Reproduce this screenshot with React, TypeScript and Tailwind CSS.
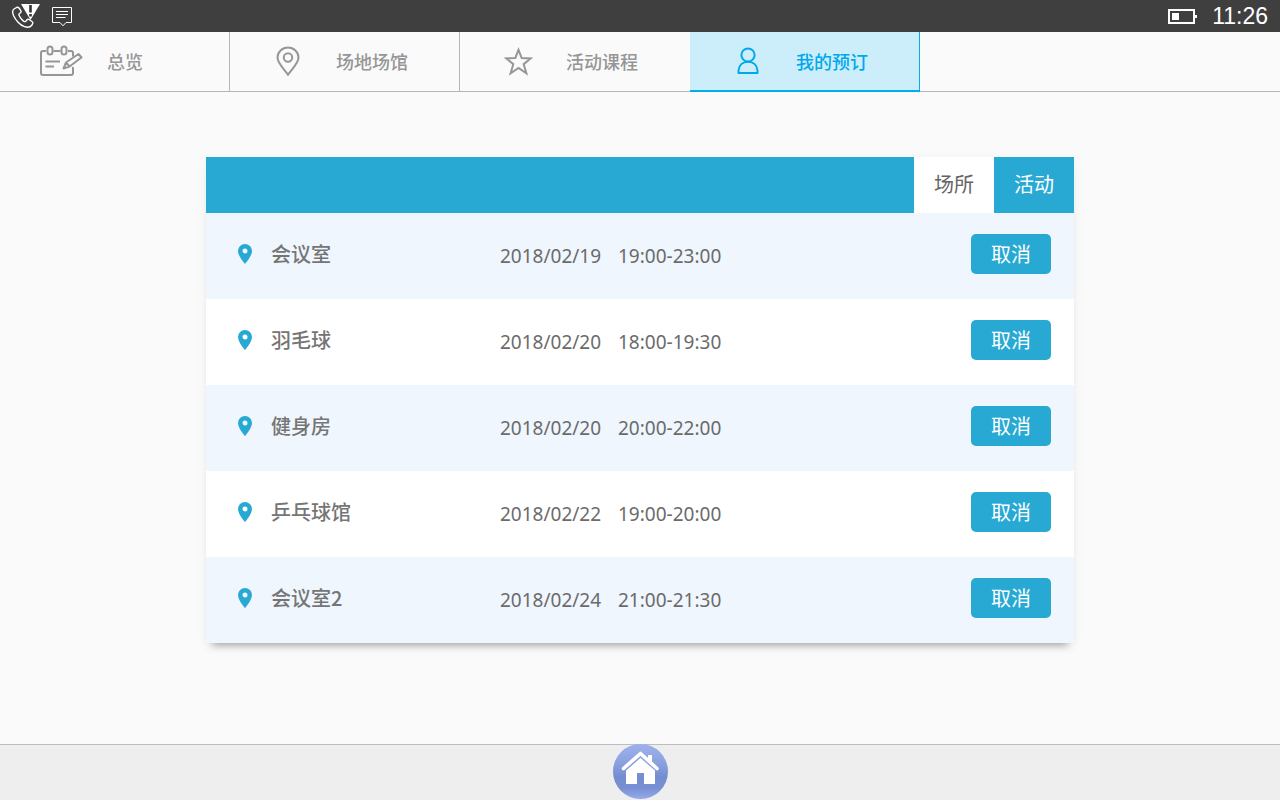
import { useState, type ReactNode } from "react";

function MissedCallIcon() {
  return (
    <svg width="30" height="26" viewBox="0 0 30 26" fill="none" aria-hidden="true">
      <path
        d="M6.500 4.500L4 6C2.500 7 2.300 9.500 3.500 12.500C5.500 17 10 22.300 14.500 23.700C18 24.800 20.500 24 22 22L22.800 20.300C23 19.500 22.700 19 22 18.500L19 16.500C18.200 16 17.500 16.200 17 16.800L15.800 18.200C15 19 14.300 18.700 13.500 18.100C11.800 16.700 10 14.500 9.100 12.500C8.700 11.600 8.800 11 9.500 10.500L10.500 9.700C11.100 9.200 11.200 8.500 10.800 7.700L9 5C8.400 4.200 7.500 4 6.500 4.500Z"
        stroke="#fff"
        strokeWidth="1.400"
      />
      <path d="M11 1H30L20.500 17Z" fill="#fff" />
      <path d="M19.200 2H21.800V9.500H19.200ZM19.200 11H21.800V13.500H19.200Z" fill="#333" />
    </svg>
  );
}

function MessageIcon() {
  return (
    <svg width="20" height="22" viewBox="0 0 20 22" fill="none" stroke="#fff" aria-hidden="true">
      <path d="M0.500 2.500H19.500V17.500H14L11 20.800L8 17.500H0.500Z" />
      <path d="M4 6.500H16M4 9.500H16M4 12.500H13.500" />
    </svg>
  );
}

function BatteryIcon() {
  return (
    <svg width="29" height="15" viewBox="0 0 29 15" aria-hidden="true">
      <rect x="1" y="1" width="25" height="13" fill="none" stroke="#fff" strokeWidth="2" />
      <rect x="27" y="6" width="2" height="3" fill="#fff" />
      <rect x="4" y="4" width="7" height="7" fill="#fff" />
    </svg>
  );
}

function OverviewIcon() {
  return (
    <svg width="43" height="32" viewBox="0 0 43 32" fill="none" stroke="currentColor" strokeWidth="2" aria-hidden="true">
      <path d="M6 6H3C1.800 6 1 6.800 1 8V28C1 29.300 1.800 30 3 30H31C32.300 30 33 29.300 33 28V22M13.500 6H20.500M28 6H31C32.300 6 33 6.800 33 8V11.500" />
      <rect x="7.500" y="1.500" width="5" height="8" rx="2.500" />
      <rect x="21.500" y="1.500" width="5" height="8" rx="2.500" />
      <path d="M5.500 16.500H20M5.500 21.500H14" />
      <path d="M23.500 23.500L26 17.500L38.500 9L41.500 12.500L29.500 21.500ZM26 17.500L29.500 21.500" strokeLinejoin="round" />
    </svg>
  );
}

function PlaceIcon() {
  return (
    <svg width="24" height="30" viewBox="0 0 24 30" fill="none" stroke="currentColor" strokeWidth="2" aria-hidden="true">
      <path d="M12 28.800C9.500 24.500 1.500 17.500 1.500 11.500A10.500 10 0 0 1 22.500 11.500C22.500 17.500 14.500 24.500 12 28.800Z" />
      <circle cx="12" cy="11.500" r="4.200" />
    </svg>
  );
}

function StarIcon() {
  return (
    <svg width="30" height="29" viewBox="0 0 30 29" fill="none" stroke="currentColor" strokeWidth="2" aria-hidden="true">
      <path d="M15.500 2.800L18.700 11.100L27.700 11.400L20.700 17.200L23.400 26.300L15.500 21L7.600 26.300L10.300 17.200L3.300 11.400L12.300 11.100Z" />
    </svg>
  );
}

function PersonIcon() {
  return (
    <svg width="22" height="28" viewBox="0 0 22 28" fill="none" stroke="currentColor" strokeWidth="2" aria-hidden="true">
      <circle cx="11" cy="8" r="6.600" />
      <path d="M1.500 26V23.500C2 18 6 14.800 11 14.800S20 18 20.500 23.500V26Z" strokeLinejoin="round" />
    </svg>
  );
}

function PinIcon() {
  return (
    <svg width="14" height="20" viewBox="0 0 14 20" aria-hidden="true">
      <path
        fill="#27a9d3"
        fillRule="evenodd"
        d="M7 0A7 7 0 0 0 0 7C0 12.200 7 20 7 20S14 12.200 14 7A7 7 0 0 0 7 0ZM7 4.500A2.500 2.500 0 1 1 7 9.500A2.500 2.500 0 0 1 7 4.500Z"
      />
    </svg>
  );
}

function HomeIcon() {
  return (
    <svg width="55" height="55" viewBox="0 0 55 55" aria-hidden="true">
      <defs>
        <linearGradient id="home-disc" x1="0" y1="0" x2="0" y2="1">
          <stop offset="0" stopColor="#9db2ec" />
          <stop offset="0.350" stopColor="#8ba1df" />
          <stop offset="0.600" stopColor="#748dcf" />
          <stop offset="0.800" stopColor="#7890d3" />
          <stop offset="1" stopColor="#94abec" />
        </linearGradient>
      </defs>
      <circle cx="27.500" cy="27.500" r="27.500" fill="url(#home-disc)" />
      <path d="M35 11H39V19L35 15.500Z" fill="#fff" />
      <path d="M10.500 24.500L27.500 9.500L44 24.500" fill="none" stroke="#fff" strokeWidth="3.600" strokeLinecap="round" strokeLinejoin="round" />
      <path d="M13 26.500L27.500 14L42 26.500V40H31V29H24V40H13Z" fill="#fff" />
    </svg>
  );
}

const tabs: { label: string; icon: ReactNode; spacing: string }[] = [
  { label: "总览", icon: <OverviewIcon />, spacing: "gap-6 pl-10" },
  { label: "场地场馆", icon: <PlaceIcon />, spacing: "gap-[27px] pl-9" },
  { label: "活动课程", icon: <StarIcon />, spacing: "gap-[27px] pl-9" },
  { label: "我的预订", icon: <PersonIcon />, spacing: "gap-[27px] pl-9" },
];

const bookings = [
  { name: "会议室", date: "2018/02/19", time: "19:00-23:00" },
  { name: "羽毛球", date: "2018/02/20", time: "18:00-19:30" },
  { name: "健身房", date: "2018/02/20", time: "20:00-22:00" },
  { name: "乒乓球馆", date: "2018/02/22", time: "19:00-20:00" },
  { name: "会议室2", date: "2018/02/24", time: "21:00-21:30" },
];

export default function App() {
  const [activeTab, setActiveTab] = useState(3);
  const [kind, setKind] = useState("场所");

  const tabState = (index: number) => {
    if (index === activeTab) return "-mb-px border-b-2 border-[#00adef] bg-[#cceefb] text-[#00a8ec]";
    if (index === activeTab - 1) return "border-transparent pb-px text-[#969696]";
    return "border-[#b5b5b5] pb-px text-[#969696]";
  };

  return (
    <div className="flex min-h-screen flex-col bg-[#fafafa] font-['Noto_Sans_CJK_SC',sans-serif]">
      <header className="flex h-8 items-center justify-between bg-[#3f3f3f] pr-3 pl-2.5 text-white">
        <div className="flex items-center gap-3">
          <MissedCallIcon />
          <MessageIcon />
        </div>
        <div className="flex items-center gap-[15px]">
          <BatteryIcon />
          <time className="font-['Liberation_Sans',sans-serif] text-[23px] leading-8">11:26</time>
        </div>
      </header>

      <nav className="flex h-[60px] border-b border-[#b5b5b5]">
        {tabs.map((tab, index) => (
          <button
            key={tab.label}
            type="button"
            onClick={() => setActiveTab(index)}
            className={`flex w-[230px] items-center border-r ${tab.spacing} ${tabState(index)}`}
          >
            <span className="flex w-[43px] justify-center">{tab.icon}</span>
            <span className="text-lg font-medium">{tab.label}</span>
          </button>
        ))}
      </nav>

      <main className="flex-1 px-6 pt-[65px] pb-6">
        <section className="mx-auto max-w-[868px] bg-white shadow-[0_8px_8px_-6px_rgba(0,0,0,0.35),0_2px_12px_rgba(0,0,0,0.04)]">
          <div className="flex h-14 justify-end bg-[#27a9d3]">
            {["场所", "活动"].map((item) => (
              <button
                key={item}
                type="button"
                onClick={() => setKind(item)}
                className={
                  kind === item
                    ? "w-20 bg-white pb-0.5 text-xl text-[#646464]"
                    : "w-20 pb-0.5 text-xl text-white"
                }
              >
                {item}
              </button>
            ))}
          </div>
          <table className="w-full table-fixed text-left">
            <colgroup>
              <col className="w-[294px]" />
              <col className="w-[118px]" />
              <col />
              <col className="w-[103px]" />
            </colgroup>
            <tbody>
              {bookings.map((b) => (
                <tr key={b.name} className="h-[86px] odd:bg-[#eff6fd]">
                  <th scope="row" className="pb-1 pl-8 text-xl font-medium text-[#757575]">
                    <span className="flex items-center gap-[19px]">
                      <PinIcon />
                      {b.name}
                    </span>
                  </th>
                  <td className="font-['Noto_Sans',sans-serif] text-[19px] text-[#6b6b6b]">{b.date}</td>
                  <td className="font-['Noto_Sans',sans-serif] text-[19px] text-[#6b6b6b]">{b.time}</td>
                  <td className="pr-[23px] pb-1">
                    <button
                      type="button"
                      aria-label={`取消 ${b.name}`}
                      className="block h-10 w-20 rounded-[5px] bg-[#27a9d3] text-xl text-white"
                    >
                      取消
                    </button>
                  </td>
                </tr>
              ))}
            </tbody>
          </table>
        </section>
      </main>

      <footer className="flex h-14 justify-center border-t border-[#bdbdbd] bg-[#eeeeee]">
        <button type="button" aria-label="主页" className="-mt-px h-[55px] w-[55px] rounded-full">
          <HomeIcon />
        </button>
      </footer>
    </div>
  );
}
